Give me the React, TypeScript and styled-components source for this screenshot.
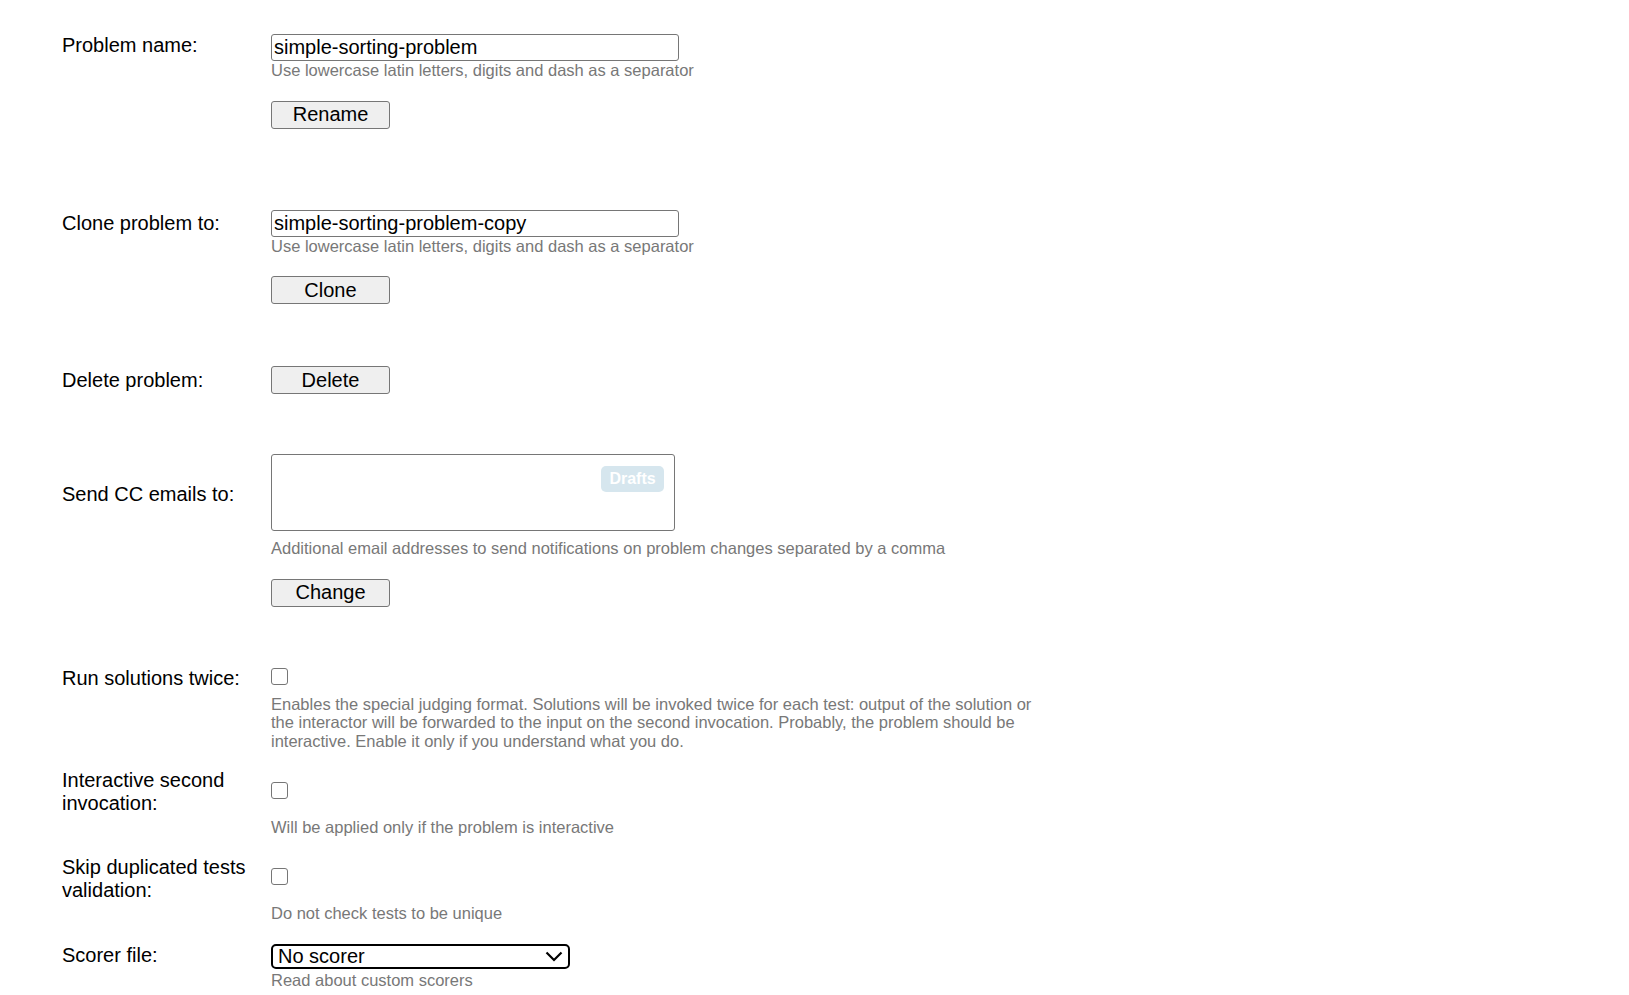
import React from "react";
import styled, { createGlobalStyle } from "styled-components";

const GlobalStyle = createGlobalStyle`
  html, body {
    margin: 0;
    padding: 0;
    background: #ffffff;
  }
  body {
    font-family: "Liberation Sans", Arial, sans-serif;
    color: #000000;
  }
`;

const Page = styled.div`
  padding: 33px 0 0 62px;
  font-family: "Liberation Sans", Arial, sans-serif;
`;

const Section = styled.div<{ $top: number }>`
  margin-top: ${(p) => p.$top}px;
`;

const Field = styled.div<{ $center?: boolean }>`
  display: flex;
  align-items: ${(p) => (p.$center ? "center" : "flex-start")};
`;

const Label = styled.div<{ $pad?: number }>`
  flex: none;
  width: 209px;
  box-sizing: border-box;
  padding-right: 12px;
  padding-top: ${(p) => p.$pad ?? 0}px;
  font-size: 20px;
  line-height: 23px;
`;

const Body = styled.div`
  display: flex;
  flex-direction: column;
  align-items: flex-start;
`;

const Hint = styled.div<{ $top?: number; $indent?: boolean }>`
  margin-top: ${(p) => p.$top ?? 0}px;
  margin-left: ${(p) => (p.$indent ? 209 : 0)}px;
  max-width: 765px;
  font-size: 16.5px;
  line-height: 18.5px;
  color: #787878;
`;

const TextInput = styled.input`
  box-sizing: border-box;
  width: 408px;
  height: 27px;
  margin: 1px 0 0;
  padding: 0 2px;
  border: 1px solid #767676;
  border-radius: 3px;
  font-family: inherit;
  font-size: 20px;
  color: #000000;
  background: #ffffff;
  outline: none;
`;

const Button = styled.button<{ $top?: number }>`
  box-sizing: border-box;
  width: 119px;
  height: 28px;
  margin-top: ${(p) => p.$top ?? 0}px;
  padding: 0;
  border: 1px solid #767676;
  border-radius: 3px;
  background: #efefef;
  font-family: inherit;
  font-size: 20px;
  color: #000000;
`;

const AreaWrap = styled.div`
  position: relative;
  width: 404px;
  height: 77px;
`;

const TextArea = styled.textarea`
  box-sizing: border-box;
  display: block;
  width: 100%;
  height: 100%;
  margin: 0;
  border: 1px solid #767676;
  border-radius: 3px;
  resize: none;
  font-family: inherit;
  font-size: 20px;
  outline: none;
`;

const DraftsBadge = styled.span`
  position: absolute;
  top: 12px;
  right: 11px;
  width: 63px;
  height: 26px;
  box-sizing: border-box;
  display: flex;
  align-items: center;
  justify-content: center;
  border-radius: 5px;
  background: #d6e6ee;
  color: #ffffff;
  font-size: 16px;
  font-weight: bold;
`;

const Checkbox = styled.input.attrs({ type: "checkbox" })`
  appearance: none;
  flex: none;
  width: 17px;
  height: 17px;
  margin: 0 0 4px;
  box-sizing: border-box;
  border: 1px solid #767676;
  border-radius: 3px;
  background: #ffffff;
`;

const SelectWrap = styled.div`
  position: relative;
  width: 299px;
  height: 25px;
`;

const Select = styled.select`
  appearance: none;
  box-sizing: border-box;
  width: 100%;
  height: 100%;
  margin: 0;
  padding: 0 0 0 5px;
  border: 2px solid #000000;
  border-radius: 5px;
  background: #ffffff;
  font-family: inherit;
  font-size: 20px;
  line-height: 21px;
  color: #000000;
  outline: none;
`;

const Chevron = styled.svg`
  position: absolute;
  right: 7px;
  top: 7px;
  pointer-events: none;
`;

export default function App() {
  return (
    <>
      <GlobalStyle />
      <Page>
        <Section $top={0}>
          <Field>
            <Label $pad={1}>Problem name:</Label>
            <Body>
              <TextInput defaultValue="simple-sorting-problem" />
              <Hint>Use lowercase latin letters, digits and dash as a separator</Hint>
              <Button $top={21}>Rename</Button>
            </Body>
          </Field>
        </Section>

        <Section $top={80}>
          <Field>
            <Label $pad={3}>Clone problem to:</Label>
            <Body>
              <TextInput defaultValue="simple-sorting-problem-copy" />
              <Hint>Use lowercase latin letters, digits and dash as a separator</Hint>
              <Button $top={21}>Clone</Button>
            </Body>
          </Field>
        </Section>

        <Section $top={62}>
          <Field $center>
            <Label>Delete problem:</Label>
            <Button>Delete</Button>
          </Field>
        </Section>

        <Section $top={60}>
          <Field>
            <Label $pad={29}>Send CC emails to:</Label>
            <Body>
              <AreaWrap>
                <TextArea />
                <DraftsBadge>Drafts</DraftsBadge>
              </AreaWrap>
              <Hint $top={8}>
                Additional email addresses to send notifications on problem changes separated by a comma
              </Hint>
              <Button $top={21}>Change</Button>
            </Body>
          </Field>
        </Section>

        <Section $top={60}>
          <Field $center>
            <Label>Run solutions twice:</Label>
            <Checkbox />
          </Field>
          <Hint $top={5} $indent>
            Enables the special judging format. Solutions will be invoked twice for each test: output of the
            solution or the interactor will be forwarded to the input on the second invocation. Probably, the
            problem should be interactive. Enable it only if you understand what you do.
          </Hint>
        </Section>

        <Section $top={19}>
          <Field $center>
            <Label>Interactive second invocation:</Label>
            <Checkbox />
          </Field>
          <Hint $top={3} $indent>
            Will be applied only if the problem is interactive
          </Hint>
        </Section>

        <Section $top={19}>
          <Field $center>
            <Label>Skip duplicated tests validation:</Label>
            <Checkbox />
          </Field>
          <Hint $top={2} $indent>
            Do not check tests to be unique
          </Hint>
        </Section>

        <Section $top={22}>
          <Field>
            <Label>Scorer file:</Label>
            <Body>
              <SelectWrap>
                <Select defaultValue="none">
                  <option value="none">No scorer</option>
                </Select>
                <Chevron width="18" height="11" viewBox="0 0 18 11">
                  <path d="M1.5 1.5 L9 9 L16.5 1.5" fill="none" stroke="#000" strokeWidth="2.2" />
                </Chevron>
              </SelectWrap>
              <Hint $top={2}>Read about custom scorers</Hint>
            </Body>
          </Field>
        </Section>
      </Page>
    </>
  );
}
